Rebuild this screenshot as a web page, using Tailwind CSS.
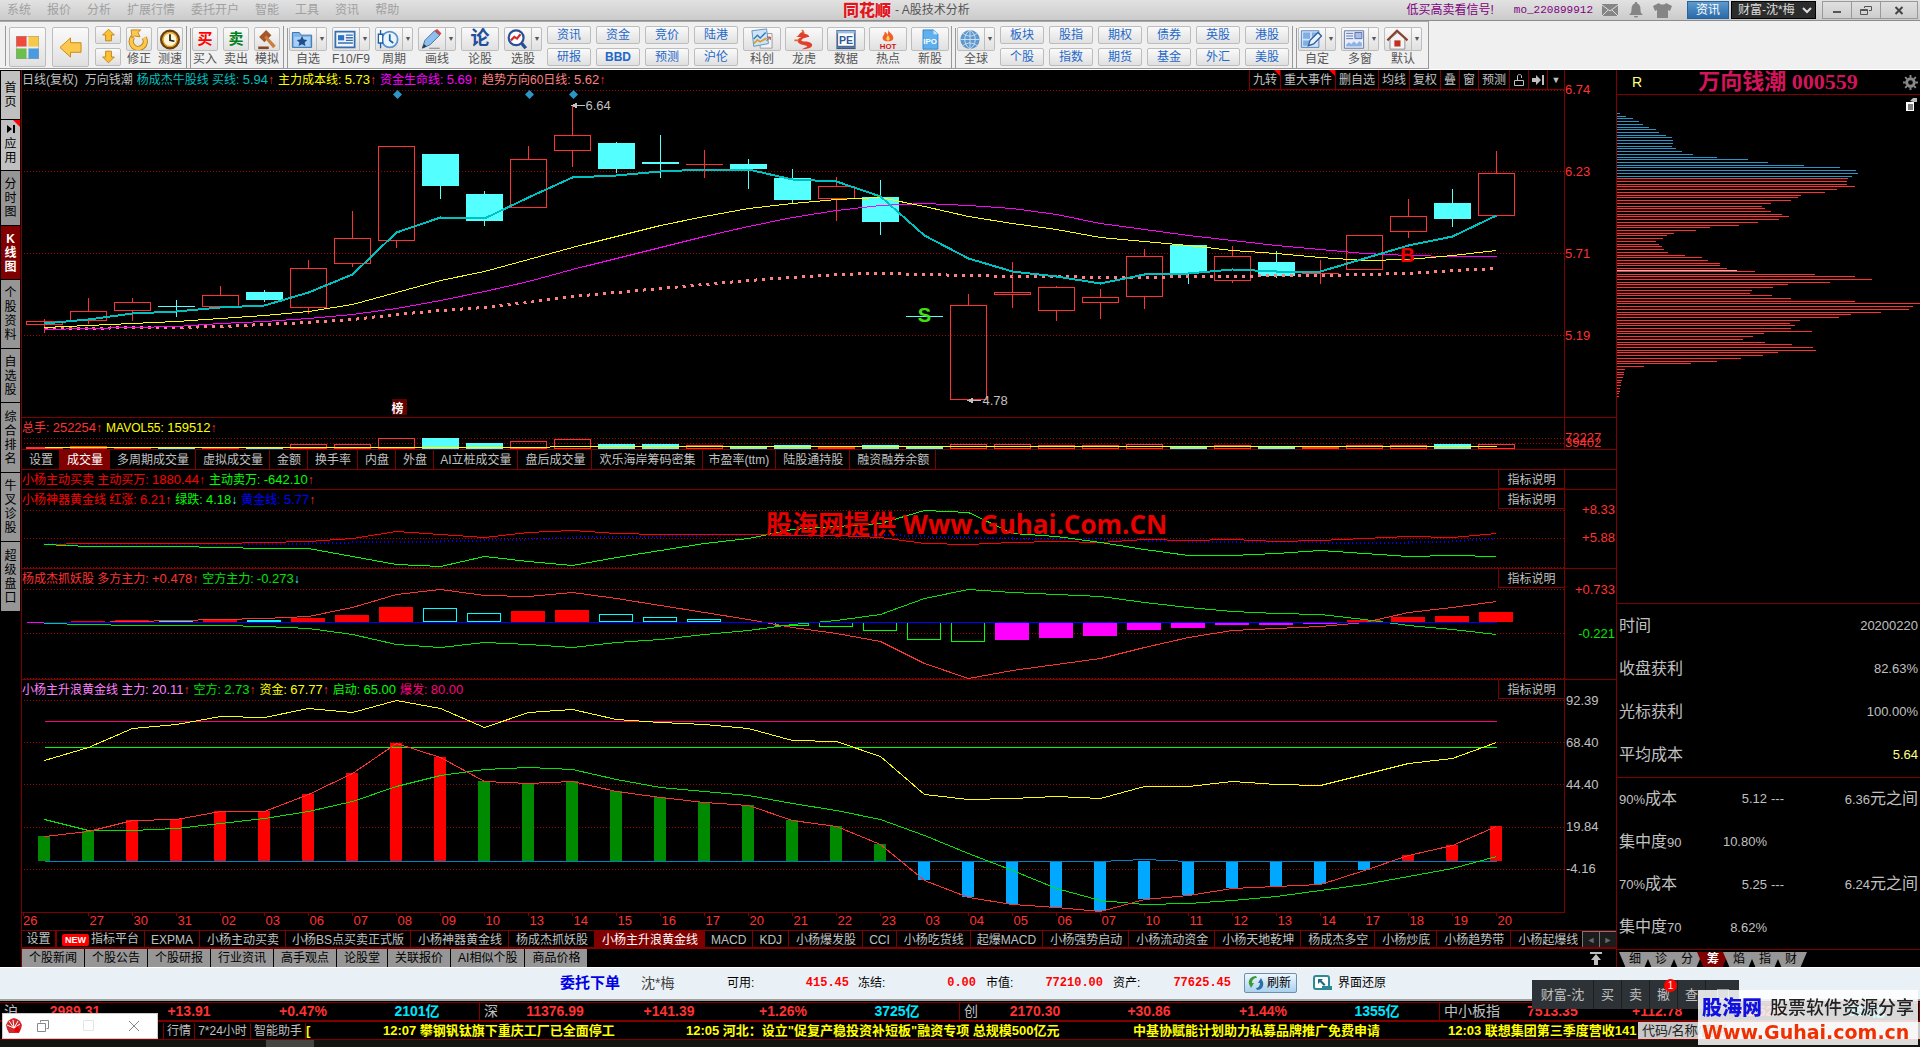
<!DOCTYPE html>
<html lang="zh-CN">
<head>
    <meta charset="UTF-8">
    <meta name="viewport" content="width=device-width, initial-scale=1.0">
    <title>同花顺 - A股技术分析</title>
    <script src="https://cdn.jsdelivr.net/npm/@tailwindcss/browser@4"></script>
</head>
<body class="bg-black min-h-screen flex flex-col overflow-hidden text-[12px] leading-[16px] text-[#c0c0c0] font-['Liberation_Sans','Noto_Sans_CJK_SC',sans-serif]">

    <!-- 标题栏 -->
    <header class="h-[21px] flex items-center bg-linear-to-b from-[#e2e2e2] to-[#cbcbcb] border-b border-[#8c8c8c] relative">
        <nav id="menu" class="flex gap-4 pl-[7px] text-[#a0a0a0]"></nav>
        <div class="absolute left-[843px] flex items-center gap-1 text-[#555]">
            <span class="text-[16px] leading-[17px] font-black text-[#e0161c] [text-shadow:0_0_2px_#fff]">同花顺</span>
            <span>- A股技术分析</span>
        </div>
        <div class="ml-auto flex items-center h-full">
            <a href="#" class="text-[#800080] mr-5">低买高卖看信号!</a>
            <span class="text-[#800080] text-[11px] font-['Liberation_Mono',monospace] mr-[9px]">mo_220899912</span>
            <svg class="w-4 h-3 mr-[11px]" viewBox="0 0 16 12"><path fill="#858585" d="M0 0h16v12H0z"/><path d="M0 1l8 6 8-6M0 12l6-6M16 12l-6-6" stroke="#ddd" fill="none"/></svg>
            <svg class="w-[14px] h-4 mr-[10px]" viewBox="0 0 14 16"><path fill="#858585" d="M7 0c1 0 1.300.700 1.300 1.500C11 2.500 11.500 5 11.500 8c0 2.500 1 3.500 2.500 5H0c1.500-1.500 2.500-2.500 2.500-5 0-3 .5-5.500 3.200-6.500C5.700.700 6 0 7 0zM5 14h4c0 2-4 2-4 0z"/></svg>
            <svg class="w-[19px] h-[15px] mr-[15px]" viewBox="0 0 19 15"><path fill="#858585" d="M6 0c1 2 6 2 7 0l6 3-2 5-2-1v8H4V7L2 8 0 3z"/></svg>
            <button class="w-[42px] h-[18px] bg-linear-to-b from-[#5b9bd0] to-[#2a6aa8] border border-[#28629a] text-white leading-[14px]">资讯</button>
            <select aria-label="账户" class="ml-[2px] w-[85px] h-[18px] bg-[#2c2c2c] border border-black text-[#ddd] text-[12px] leading-[16px] pl-[2px]"><option>财富-沈*梅</option></select>
            <div class="flex ml-[6px] mr-[2px] border border-[#999] text-[#555] h-[18px]">
                <button aria-label="最小化" class="w-[29px] flex justify-center items-center border-r border-[#999]"><svg width="10" height="10"><path d="M1 7h8" stroke="#555" stroke-width="2"/></svg></button>
                <button aria-label="还原" class="w-[29px] flex justify-center items-center border-r border-[#999]"><svg width="12" height="11" fill="none" stroke="#555"><path d="M4.500 3V1.500h7v4H9M.500 4.500h7v5h-7zM.500 5.500h7"/></svg></button>
                <button aria-label="关闭" class="w-[36px] flex justify-center items-center"><svg width="10" height="9"><path d="M1.500 1l7 7M8.500 1l-7 7" stroke="#444" stroke-width="2"/></svg></button>
            </div>
        </div>
    </header>

    <!-- 工具栏 -->
    <div class="h-[49px] bg-[#f0f0f0] border-b border-white text-[#555]">
        <div id="toolbar" class="w-[1429px] h-[48px] flex items-start pt-[4px] pl-[4px] border-t border-t-[#aaa] border-b border-b-[#999] border-r border-r-[#999]"></div>
    </div>

    <main class="flex">
        <aside id="side" class="w-[22px] shrink-0 border-r border-[#800000] pl-[1px] pt-[1px] flex flex-col gap-px"></aside>

        <section class="flex-1 min-w-0">
            <!-- K线 -->
            <div class="flex h-[348px] border-b border-[#800000]">
                <div class="flex-1 relative">
                    <svg id="price" class="absolute inset-0 w-full h-full"></svg>
                    <div class="relative pt-[2px] flex gap-1 whitespace-nowrap">
                        <span>日线(复权)&nbsp; 万向钱潮</span>
                        <span class="text-[#00c0c0]">杨成杰牛股线 买线: <b class="font-normal text-[13px]">5.94</b><i class="not-italic text-[#ff3232]">↑</i></span>
                        <span class="text-[#ffff00]">主力成本线: <b class="font-normal text-[13px]">5.73</b><i class="not-italic text-[#ff3232]">↑</i></span>
                        <span class="text-[#ff00ff]">资金生命线: <b class="font-normal text-[13px]">5.69</b><i class="not-italic text-[#ff3232]">↑</i></span>
                        <span class="text-[#ff8080]">趋势方向60日线: <b class="font-normal text-[13px]">5.62</b><i class="not-italic text-[#ff3232]">↑</i></span>
                    </div>
                    <div id="chartTools" class="absolute top-0 right-0 h-[20px] flex bg-black border-b border-l border-[#800000]"></div>
                </div>
                <div class="w-[52px] border-l border-[#800000] text-[#ff3232] text-[13px] pt-[12px] flex flex-col gap-[66px]">
                    <span>6.74</span><span>6.23</span><span>5.71</span><span>5.19</span>
                </div>
            </div>

            <!-- 成交量 -->
            <div class="flex h-[32px] border-b border-[#800000]">
                <div class="flex-1 relative">
                    <svg id="volume" class="absolute inset-0 w-full h-full"></svg>
                    <div class="relative pt-[2px] flex gap-1">
                        <span class="text-[#ff3232]">总手: <b class="font-normal text-[13px]">252254</b>↑</span>
                        <span class="text-[#ffff00] text-[12px]">MAVOL55: <b class="font-normal text-[13px]">159512</b><i class="not-italic text-[#ff3232]">↑</i></span>
                    </div>
                </div>
                <div class="w-[52px] border-l border-[#800000] text-[#ff3232] text-[13px] pt-[12px]">
                    <span class="block h-[5px]">72227</span><span class="block h-[5px]">39402</span>
                </div>
            </div>
            <div id="volTabs" class="flex h-[20px] border-b border-[#800000] whitespace-nowrap overflow-hidden"></div>

            <!-- 主动买卖 -->
            <div class="flex h-[20px] border-b border-[#800000]">
                <div class="flex-1 flex gap-1 pt-[2px] text-[#ff0000]">
                    <span>小杨主动买卖 主动买万: <b class="font-normal text-[13px]">1880.44</b>↑</span>
                    <span class="text-[#00ff00]">主动卖万: <b class="font-normal text-[13px]">-642.10</b><i class="not-italic text-[#ff3232]">↑</i></span>
                    <button class="ml-auto -mt-[2px] pt-px w-[66px] h-[19px] border-l border-b border-[#800000] text-[#c0c0c0]">指标说明</button>
                </div>
                <div class="w-[52px] border-l border-[#800000]"></div>
            </div>

            <!-- 神器黄金线 -->
            <div class="flex h-[79px] border-b border-[#800000]">
                <div class="flex-1 relative">
                    <svg id="gold" class="absolute inset-0 w-full h-full"></svg>
                    <div class="relative pt-[2px] flex gap-1 text-[#ff0000]">
                        <span>小杨神器黄金线 红涨: <b class="font-normal text-[13px]">6.21</b><i class="not-italic text-[#ff3232]">↑</i></span>
                        <span class="text-[#00ff00]">绿跌: <b class="font-normal text-[13px]">4.18</b><i class="not-italic text-[#54ffff]">↓</i></span>
                        <span class="text-[#0000ff]">黄金线: <b class="font-normal text-[13px]">5.77</b><i class="not-italic text-[#ff3232]">↑</i></span>
                    </div>
                    <button class="absolute top-0 right-0 pt-px w-[66px] h-[19px] border-l border-b border-[#800000] bg-black">指标说明</button>
                    <p class="absolute left-[744px] top-[16px] text-[#e60000] font-bold text-[26px] leading-[36px] whitespace-nowrap font-['Open_Sans','Noto_Sans_CJK_SC',sans-serif]">股海网提供 Www.Guhai.Com.CN</p>
                </div>
                <div class="w-[52px] border-l border-[#800000] text-[#ff3232] text-[13px] text-right pr-px pt-[12px] flex flex-col gap-[12px]">
                    <span>+8.33</span><span>+5.88</span>
                </div>
            </div>

            <!-- 抓妖股 -->
            <div class="flex h-[111px] border-b border-[#800000]">
                <div class="flex-1 relative">
                    <svg id="force" class="absolute inset-0 w-full h-full"></svg>
                    <div class="relative pt-[2px] flex gap-1">
                        <span class="text-[#ff3232]">杨成杰抓妖股 多方主力: <b class="font-normal text-[13px]">+0.478</b>↑</span>
                        <span class="text-[#00e600]">空方主力: <b class="font-normal text-[13px]">-0.273</b><i class="not-italic text-[#54ffff]">↓</i></span>
                    </div>
                    <button class="absolute top-0 right-0 pt-px w-[66px] h-[19px] border-l border-b border-[#800000] bg-black">指标说明</button>
                </div>
                <div class="w-[52px] border-l border-[#800000] text-[#ff3232] text-[13px] text-right pr-px pt-[13px] flex flex-col gap-[28px]">
                    <span>+0.733</span><span class="text-[#00e600]">-0.221</span>
                </div>
            </div>

            <!-- 主升浪 -->
            <div class="flex h-[233px]">
                <div class="flex-1 relative border-b border-[#800000]">
                    <svg id="wave" class="absolute inset-0 w-full h-full"></svg>
                    <div class="relative pt-[2px] flex gap-1">
                        <span class="text-[#ff80ff]">小杨主升浪黄金线 主力: <b class="font-normal text-[13px]">20.11</b><i class="not-italic text-[#ff3232]">↑</i></span>
                        <span class="text-[#00e600]">空方: <b class="font-normal text-[13px]">2.73</b><i class="not-italic text-[#ff3232]">↑</i></span>
                        <span class="text-[#ffff00]">资金: <b class="font-normal text-[13px]">67.77</b><i class="not-italic text-[#ff3232]">↑</i></span>
                        <span class="text-[#00ff00]">启动: <b class="font-normal text-[13px]">65.00</b></span>
                        <span class="text-[#ff0080]">爆发: <b class="font-normal text-[13px]">80.00</b></span>
                    </div>
                    <button class="absolute top-0 right-0 pt-px w-[66px] h-[19px] border-l border-b border-[#800000] bg-black">指标说明</button>
                </div>
                <div class="w-[52px] border-l border-[#800000] text-[13px] pl-px pt-[13px] flex flex-col gap-[26px]">
                    <span>92.39</span><span>68.40</span><span>44.40</span><span>19.84</span><span>-4.16</span>
                </div>
            </div>
            <div class="flex h-[17px]">
                <div class="flex-1 relative"><svg id="dates" class="absolute inset-0 w-full h-full"></svg></div>
                <div class="w-[52px]"></div>
            </div>

            <div class="flex h-[19px] border-t border-t-[#800000] border-b-2 border-b-[#800000] whitespace-nowrap">
                <div id="indTabs" class="flex-1 min-w-0 flex overflow-hidden leading-[17px]"></div>
                <button aria-label="向左" class="w-[17px] shrink-0 bg-[#1c1c1c] border-l border-t border-[#777] text-[#666] text-[9px] leading-[14px]">◄</button>
                <button aria-label="向右" class="w-[17px] shrink-0 bg-[#1c1c1c] border-l border-t border-[#777] text-[#666] text-[9px] leading-[14px]">►</button>
            </div>
            <div class="flex h-[18px] items-center whitespace-nowrap">
                <div id="newsTabs" class="flex gap-px h-full"></div>
                <svg class="ml-auto mr-[14px]" width="12" height="13" fill="#c0c0c0"><path d="M0 0h12v2H0zM6 2l5 6H8v5H4V8H1z"/></svg>
            </div>
        </section>

        <!-- 筹码分布 -->
        <section class="w-[304px] shrink-0 border-l border-[#800000] flex flex-col">
            <div class="h-[25px] border-b border-[#800000] flex items-center pl-[15px] pr-[2px]">
                <span class="text-[#ffff80] text-[14px]">R</span>
                <h1 class="ml-[56px] text-[#d4145a] font-bold text-[22px] leading-[24px] font-['Liberation_Serif','Noto_Sans_CJK_SC',serif]">万向钱潮 000559</h1>
                <svg class="ml-auto w-[15px] h-[15px]" viewBox="0 0 16 16"><circle cx="8" cy="8" r="4" fill="none" stroke="#888" stroke-width="3"/><path d="M8 0v3M8 13v3M0 8h3M13 8h3M2.300 2.300l2 2M11.700 11.700l2 2M13.700 2.300l-2 2M4.300 11.700l-2 2" stroke="#888" stroke-width="2"/></svg>
            </div>
            <div class="h-[508px] relative">
                <svg id="chips" class="absolute inset-0 w-full h-full"></svg>
                <svg class="absolute top-[3px] right-[1px]" width="14" height="13"><path fill="#fff" d="M1 4h8v9H1z"/><path d="M3 7h5M3 9h5M3 11h5" stroke="#000"/><path d="M5 3l3-3h4v4H9z" fill="#bbb"/></svg>
            </div>
            <dl class="h-[174px] border-t border-[#800000] px-[2px] grid grid-cols-[auto_1fr] items-center text-[16px] leading-[20px]">
                <dt>时间</dt><dd class="text-right text-[13px]">20200220</dd>
                <dt>收盘获利</dt><dd class="text-right text-[13px]">82.63%</dd>
                <dt>光标获利</dt><dd class="text-right text-[13px]">100.00%</dd>
                <dt>平均成本</dt><dd class="text-right text-[13px] text-[#ffff80]">5.64</dd>
            </dl>
            <dl class="h-[172px] border-t border-[#800000] px-[2px] grid grid-cols-[60px_88px_20px_1fr] items-center text-[16px] leading-[20px] whitespace-nowrap">
                <dt><b class="font-normal text-[13px]">90%</b>成本</dt><dd class="text-right text-[13px]">5.12</dd><dd class="pl-1 text-[13px]">---</dd><dd class="text-right"><b class="font-normal text-[13px]">6.36</b>元之间</dd>
                <dt>集中度<b class="font-normal text-[13px]">90</b></dt><dd class="text-right text-[13px]">10.80%</dd><dd></dd><dd></dd>
                <dt><b class="font-normal text-[13px]">70%</b>成本</dt><dd class="text-right text-[13px]">5.25</dd><dd class="pl-1 text-[13px]">---</dd><dd class="text-right"><b class="font-normal text-[13px]">6.24</b>元之间</dd>
                <dt>集中度<b class="font-normal text-[13px]">70</b></dt><dd class="text-right text-[13px]">8.62%</dd><dd></dd><dd></dd>
            </dl>
            <div id="sideTabs" class="h-[18px] border-t border-[#800000] pl-[2px] pt-[2px] flex"></div>
        </section>
    </main>

    <!-- 委托栏 -->
    <div class="h-[34px] bg-[#eaf1f6] border-t border-white border-b-2 border-b-[#a0a0a0] text-black flex items-center pl-[560px] pb-[2px] relative whitespace-nowrap">
        <a href="#" class="text-[#0000e6] font-bold text-[15px] w-[81px]">委托下单</a>
        <span class="text-[#444] text-[14px] w-[86px]">沈*梅</span>
        <span class="w-[36px]">可用:</span><b class="w-[86px] text-right text-[#ff0000] text-[12px] font-['Liberation_Mono',monospace]">415.45</b>
        <span class="w-[36px] ml-[9px]">冻结:</span><b class="w-[82px] text-right text-[#ff0000] text-[12px] font-['Liberation_Mono',monospace]">0.00</b>
        <span class="w-[36px] ml-[10px]">市值:</span><b class="w-[81px] text-right text-[#ff0000] text-[12px] font-['Liberation_Mono',monospace]">77210.00</b>
        <span class="w-[36px] ml-[10px]">资产:</span><b class="w-[82px] text-right text-[#ff0000] text-[12px] font-['Liberation_Mono',monospace]">77625.45</b>
        <button class="ml-[13px] w-[53px] h-[20px] rounded-[2px] border border-[#6d8fb0] bg-linear-to-b from-[#eef6fc] to-[#a9d2ef] flex items-center gap-[2px] pl-[2px]">
            <svg width="18" height="16" viewBox="0 0 18 16"><path d="M9 1C4 1 1 5 2 9l2 4 3-5H5c0-3 2-5 5-5z" fill="#3f9a35"/><path d="M10 15c5 0 7-4 6-8l-2-4-3 5h2c0 3-2 5-4 5z" fill="#2f6fa8"/></svg>刷新
        </button>
        <button class="ml-4 flex items-center gap-[5px]">
            <svg width="20" height="16" viewBox="0 0 20 16"><rect x="1" y="1" width="15" height="13" rx="2" fill="#fff" stroke="#2b8a94" stroke-width="2"/><path d="M5 4h5L8.500 5.500l4 4-1.500 1.500-4-4L5 9z" fill="#1d6d80"/><path d="M9 11h10v4H9z" fill="#2b8a94"/></svg>界面还原
        </button>
        <div class="absolute z-10 left-[1532px] top-[12px] h-[29px] flex bg-[#2d3237] text-[#c0c0c0] text-[13px] divide-x divide-[#1c1f22]">
            <span class="w-[62px] flex items-center justify-center">财富-沈</span>
            <button class="w-[28px]">买</button><button class="w-[28px]">卖</button>
            <button class="w-[28px] relative">撤<span class="absolute -top-px right-0 w-[13px] h-[13px] rounded-full bg-[#ff0000] text-white text-[10px] leading-[13px]">1</span></button>
            <button class="w-[28px]">查</button>
            <button aria-label="窗口" class="w-[33px] flex justify-center items-center"><svg width="12" height="11"><rect x=".5" y=".5" width="11" height="9" fill="none" stroke="#999"/></svg></button>
        </div>
    </div>

    <!-- 指数栏 -->
    <div id="indexRow" class="mt-px h-[20px] border-t border-t-[#800000] border-b-2 border-b-[#800000] grid grid-cols-4 font-bold text-[14px] leading-[17px] text-[#ff3232] whitespace-nowrap"></div>

    <!-- 滚动资讯 -->
    <div class="h-[18px] border-b border-[#800000] flex items-center pl-[163px] whitespace-nowrap overflow-hidden">
        <button class="w-[32px] shrink-0 border-r border-l border-[#800000]">行情</button>
        <button class="w-[56px] shrink-0 border-r border-[#800000]">7*24小时</button>
        <button class="w-[55px] shrink-0 border-r border-[#800000]">智能助手</button>
        <div class="flex-1 min-w-0 overflow-hidden flex font-bold text-[13px] text-[#ffff00]">
            <a href="#" class="shrink-0 w-[77px]">[</a>
            <a href="#" class="shrink-0 w-[303px]">12:07 攀钢钒钛旗下重庆工厂已全面停工</a>
            <a href="#" class="shrink-0 w-[447px]">12:05 河北：设立"促复产稳投资补短板"融资专项 总规模500亿元</a>
            <a href="#" class="shrink-0 w-[315px]">中基协赋能计划助力私募品牌推广免费申请</a>
            <a href="#" class="shrink-0">12:03 联想集团第三季度营收141</a>
        </div>
        <input aria-label="代码搜索" placeholder="代码/名称/简拼" class="w-[282px] h-[17px] bg-[#c8c8c8] pl-1 text-[13px] placeholder:text-[#222]">
    </div>
    <div class="flex-1 bg-[#14150e] flex"><div class="ml-[266px] w-[48px] bg-[#45463f]"></div></div>

    <!-- 浮动小窗 -->
    <div class="fixed left-[2px] bottom-[8px] w-[156px] h-[26px] bg-white border border-[#ccc] flex items-center">
        <svg class="ml-[3px]" width="16" height="16" viewBox="0 0 16 16"><path d="M8 0l3 1 3 2 2 4-1 4-2 4H3L1 11 0 7l2-4 3-2z" fill="#d02a2e"/><path d="M8 10L3 3M8 10L7 2M8 10l4-7M8 10L1 7M8 10l6-4" stroke="#fff"/><path d="M11 8c4 4 3 6 0 6s-4-2 0-6z" fill="#e00"/></svg>
        <svg class="ml-[15px]" width="12" height="12" fill="none" stroke="#888"><path d="M3.500 2.500v-2h8v8h-2M.500 3.500h8v8h-8z"/></svg>
        <svg class="ml-[34px]" width="12" height="12" fill="none" stroke="#e5e5e5"><path d="M.500 .500h10v10h-10z"/></svg>
        <svg class="ml-[33px]" width="12" height="12" stroke="#888"><path d="M1 1l10 10M11 1L1 11"/></svg>
    </div>

    <!-- 站点水印 -->
    <div class="fixed z-20 right-[2px] bottom-[2px] w-[220px] h-[55px] bg-white/85 px-1 pt-[4px] whitespace-nowrap">
        <div class="flex items-center gap-2 h-[27px]">
            <span class="text-[#1010e0] font-black text-[20px] leading-[26px]">股海网</span>
            <span class="text-[#222] font-medium text-[18px] leading-[24px]">股票软件资源分享</span>
        </div>
        <div class="text-[#f03000] font-bold text-[19px] leading-[22px] font-['DejaVu_Sans',sans-serif]">Www.Guhai.com.cn</div>
    </div>

    <script>
        const $ = id => document.getElementById(id);

        $('menu').innerHTML = ['系统', '报价', '分析', '扩展行情', '委托开户', '智能', '工具', '资讯', '帮助']
            .map(t => `<a href="#">${t}</a>`).join('');

        // ---------- 工具栏 ----------
        const ICONS = {
            grid: '<path d="M0 0h11v11H0z" fill="#ef4b3d"/><path d="M13 0h11v11H13z" fill="#f7c948"/><path d="M0 13h11v11H0z" fill="#6bbf4b"/><path d="M13 13h11v11H13z" fill="#4a9ae0"/><path d="M0 0h24v24H0z" fill="none" stroke="#999"/>',
            left: '<path d="M1 12L12 2v5h11v10H12v5z" fill="#fcc84e" stroke="#c98a10"/>',
            up: '<path d="M12 2l10 10h-5v10H7V12H2z" fill="#fcc030" stroke="#b98018" stroke-width="1.500"/>',
            down: '<path d="M12 22L2 12h5V2h10v10h5z" fill="#fcc030" stroke="#b98018" stroke-width="1.500"/>',
            redo: '<path d="M5 9a8 8 0 1 0 13 1" fill="none" stroke="#b98018" stroke-width="6"/><path d="M5 9a8 8 0 1 0 13 1" fill="none" stroke="#fcc84e" stroke-width="4"/><path d="M3 1h11l-3 3 2 5-6-1-3 2z" fill="#fcc84e" stroke="#b98018"/>',
            clock: '<circle cx="12" cy="12" r="10" fill="#fff6d8" stroke="#6b3f10" stroke-width="3"/><circle cx="12" cy="12" r="8" fill="none" stroke="#e6a020" stroke-width="1.500"/><path d="M12 6v7l5 1" stroke="#222" fill="none" stroke-width="2"/>',
            gavel: '<path d="M3 9l8-8 6 6-8 8z" fill="#a5562a"/><path d="M11 7l11 12-3 3L9 10z" fill="#c98040"/><path d="M2 20h12v3H2z" fill="#8a4520"/>',
            folder: '<path d="M1 4h8l2 3h12v14H1z" fill="#7db4ea" stroke="#2f68a8"/><path d="M3 9h18v11H3z" fill="#a9d0f5"/><path d="M12 8l2 4 4 .500-3 3 1 4-4-2-4 2 1-4-3-3 4-.500z" fill="#1f4f8a"/>',
            card: '<path d="M1 3h22v18H1z" fill="#eef5fd" stroke="#3a6fae" stroke-width="2"/><path d="M4 7h7v6H4z" fill="#2f74c4"/><path d="M13 7h8M13 10h8M13 13h8M4 16h17" stroke="#3a6fae" stroke-width="1.500"/>',
            period: '<circle cx="14" cy="12" r="9" fill="#eaf4fd" stroke="#5a93cc" stroke-width="2"/><path d="M14 6v7l4 3" stroke="#1f5fa8" fill="none" stroke-width="2"/><path d="M1 6h5v10H1zM3.500 1v5M3.500 16v6" stroke="#1f5fa8" fill="#fff" stroke-width="1.500"/>',
            pen: '<path d="M2 22l3-9L16 2l6 5L11 18z" fill="#8fc0ec" stroke="#2f68a8"/><path d="M16 2l3-2 5 5-2 2z" fill="#d0443c"/><path d="M2 22l2-5 3 3z" fill="#333"/><path d="M10 22h12" stroke="#777"/>',
            search: '<circle cx="11" cy="10" r="8.500" fill="#fff" stroke="#2a4f96" stroke-width="2.500"/><path d="M17 16l5 6" stroke="#2a4f96" stroke-width="4"/><path d="M5 13l4-4 3 2 4-5" fill="none" stroke="#d8282c" stroke-width="2.500"/>',
            star: '<path d="M10 6h13v16H10z" fill="#f3f3f3" stroke="#999"/><path d="M1 3l16-2 2 16-16 3z" fill="#cfe4f8" stroke="#5a8fc0"/><path d="M3 12l4-4 3 3 6-6" fill="none" stroke="#3777b8" stroke-width="1.500"/><path d="M3 17l4-4 3 2 7-4" fill="none" stroke="#d8a030" stroke-width="2"/><path d="M17 14l4-4M18 10h3v3" stroke="#a03020" fill="none"/>',
            dragon: '<path d="M3 9c4-1 3-6 9-6-2 3 6 2 6 6-3 0-9 2-9 4s10 0 12 4-5 6-12 6c5-2 8-3 6-4S4 18 5 13c0-2 2-3 4-4-2 0-4 0-6 0z" fill="#e0402c"/><path d="M10 1l2 4M1 13h5" stroke="#e86a30" stroke-width="2"/>',
            pe: '<path d="M2 2h20v18H2z" fill="#fff" stroke="#4a6a9a" stroke-width="2"/><path d="M2 2h20v3H2z" fill="#9dbbe0"/><path d="M1 21h22v2H1z" fill="#3a5a8c"/><text x="12" y="17" text-anchor="middle" font-size="12" font-weight="bold" fill="#2f5a9a">PE</text>',
            hot: '<path d="M12 0c1 5 7 6 6 11-1 4-11 4-12 0-1-4 3-4 2-8 3 1 3 3 3 4 1-2 2-4 1-7z" fill="#f0602c"/><path d="M12 7c3 4 2 6 0 6s-3-2 0-6z" fill="#ffd54a"/><text x="12" y="23" text-anchor="middle" font-size="9" font-weight="bold" fill="#d01818">HOT</text>',
            ipo: '<path d="M4 1h12l5 5v17H4z" fill="#5fb0ee" stroke="#2f80c4"/><path d="M16 1v5h5z" fill="#cfe6fa"/><text x="12" y="17" text-anchor="middle" font-size="9" font-weight="bold" fill="#fff">IPO</text>',
            globe: '<circle cx="12" cy="12" r="11" fill="#5f98cc"/><path d="M1 12h22M12 1v22M4 5c5 4 11 4 16 0M4 19c5-4 11-4 16 0M12 1c-8 6-8 16 0 22M12 1c8 6 8 16 0 22" fill="none" stroke="#d5e6f5"/>',
            custom: '<path d="M1 2h20v19H1z" fill="#cfe2f8" stroke="#4a7ab8"/><path d="M3 4h8v7H3zM13 4h6v7h-6zM3 13h8v6H3z" fill="#7daee4"/><path d="M9 19l2-6 9-9 4 4-9 9z" fill="#eaf2fa" stroke="#2f5f9a" stroke-width="1.500"/>',
            multi: '<path d="M1 2h22v20H1z" fill="#e6effa" stroke="#5a6f9a"/><path d="M3 5h8M3 8h8M3 11h8" stroke="#5868a8"/><path d="M13 4h8v7h-8z" fill="#a8bfe6" stroke="#5868a8"/><path d="M3 18l3-3 3 2 3-3 3 3 3-3 3 2v4H3z" fill="#8fb2e4"/>',
            home: '<path d="M4 11v12h17V11l-8-7z" fill="#f4f4f4" stroke="#888"/><path d="M1 13L12 2l12 11" fill="none" stroke="#8a4030" stroke-width="2.500"/><path d="M9 13h7v7H9z" fill="#c03020"/>',
        };
        const svg = (k, s) => `<svg class="shrink-0 ${s || 'w-[22px] h-[21px]'}" viewBox="0 0 24 24">${ICONS[k]}</svg>`;
        const BTN = 'flex items-center justify-center rounded-[2px] border border-[#bdbdbd] bg-linear-to-b from-[#fafafa] to-[#e0e0e0]';
        const big = k => `<button aria-label="${k}" class="mt-px w-[37px] h-[40px] mr-[6px] shrink-0 ${BTN}">${svg(k, 'w-[23px] h-[23px]')}</button>`;
        const sep = () => '<span class="-ml-[2px] w-[6px] h-[43px] shrink-0 border-l border-[#999] flex items-center pl-[2px]"><i class="w-[2px] h-[40px] border-r border-[#999]"></i></span>';
        // 双排文字按钮
        const pair = (a, b) => `<div class="w-[44px] mr-[5px] shrink-0 flex flex-col gap-[4px]">${[a, b].map(t =>
            `<button class="h-[18px] text-[#1e68c8] ${t === 'BBD' ? 'font-bold font-[\'Liberation_Serif\',serif]' : ''} ${BTN}">${t}</button>`).join('')}</div>`;
        const tool = (label, icon, drop) => `<button class="w-[38px] ${drop || label === '论股' ? 'mr-[5px]' : 'mr-[4px]'} mt-px shrink-0 flex flex-col items-center whitespace-nowrap">
            <span class="w-full h-[24px] ${BTN}">${icon}${drop ? '<i class="ml-[3px] h-full border-l border-[#bdbdbd] not-italic text-[7px] leading-[22px] pl-[2px]">▼</i>' : ''}</span>
            <span class="leading-[16px]">${label}</span></button>`;
        const small = (label, icon) => `<button class="w-[26px] mr-[5px] mt-px shrink-0 flex flex-col items-center whitespace-nowrap">
            <span class="w-full h-[24px] ${BTN}">${icon}</span><span class="leading-[16px]">${label}</span></button>`;

        $('toolbar').innerHTML = '<i class="w-[2px] h-[40px] border-r border-[#999] mr-[3px] shrink-0"></i>' + big('grid') + big('left') +
            `<div class="w-[26px] mr-[5px] shrink-0 flex flex-col gap-[4px]"><button aria-label="上" class="h-[18px] ${BTN}">${svg('up', 'w-[15px] h-[14px]')}</button><button aria-label="下" class="h-[18px] ${BTN}">${svg('down', 'w-[15px] h-[14px]')}</button></div>` +
            small('修正', svg('redo')) + small('测速', svg('clock')) + sep() +
            small('买入', '<b class="text-[15px] text-[#ff0000]">买</b>') + small('卖出', '<b class="text-[15px] text-[#008020]">卖</b>') + small('模拟', svg('gavel')) + sep() +
            tool('自选', svg('folder'), 1) + tool('F10/F9', svg('card'), 1) + tool('周期', svg('period'), 1) + tool('画线', svg('pen'), 1) +
            tool('论股', '<b class="text-[19px] text-[#1f4f9a]">论</b>') + tool('选股', svg('search'), 1) +
            pair('资讯', '研报') + pair('资金', 'BBD') + pair('竞价', '预测') + pair('陆港', '沪伦') +
            tool('科创', svg('star', 'w-[28px] h-[22px]')) + tool('龙虎', svg('dragon')) + tool('数据', svg('pe')) + tool('热点', svg('hot')) + tool('新股', svg('ipo')) + sep() +
            tool('全球', svg('globe'), 1) +
            pair('板块', '个股') + pair('股指', '指数') + pair('期权', '期货') + pair('债券', '基金') + pair('英股', '外汇') + pair('港股', '美股') + sep() +
            tool('自定', svg('custom'), 1) + tool('多窗', svg('multi'), 1) + tool('默认', svg('home'), 1);

        // ---------- 左侧栏 ----------
        const sides = [['首页', 48, 1], ['应用', 50, 1], ['分时图', 54], ['K线图', 53, 2], ['个股资料', 68], ['自选股', 53], ['综合排名', 69], ['牛叉诊股', 68], ['超级盘口', 69]];
        const sideCls = ['bg-[#969696] text-black', 'bg-[#c0c0c0] text-black', 'bg-[#800000] text-white font-bold'];
        $('side').innerHTML = sides.map(([t, h, c]) =>
            `<button class="relative w-[19px] flex flex-col items-center justify-center leading-[14px] text-[12px] ${sideCls[c || 0]}" style="height:${h}px">${t === '应用' ? '<svg width="8" height="8" class="mb-[4px]"><path d="M0 0l5 4-5 4zM6 0h2v8H6z"/></svg><i class="absolute right-0 top-0 border-t-[7px] border-t-[#ff0000] border-l-[7px] border-l-transparent"></i>' : ''}${[...t].map(s => `<span>${s}</span>`).join('')}</button>`).join('');

        // ---------- 标签 ----------
        const tabs = (list, on) => list.map(t => `<button class="h-full pt-px shrink-0 ${/[A-Z(]/.test(t) ? 'px-[6px]' : 'pl-[7px] pr-[6px]'} border-r border-[#800000] ${t === on ? 'bg-[#800000] text-white' : ''}">${t}</button>`).join('');
        $('volTabs').innerHTML = tabs(['设置', '成交量', '多周期成交量', '虚拟成交量', '金额', '换手率', '内盘', '外盘', 'AI立桩成交量', '盘后成交量', '欢乐海岸筹码密集', '市盈率(ttm)', '陆股通持股', '融资融券余额'], '成交量');
        $('indTabs').innerHTML = '<button class="shrink-0 w-[34px] border-r border-[#800000]">设置</button><button class="shrink-0 w-[89px] border-x border-[#800000]"><b class="bg-[#ff0000] text-white text-[9px] rounded-[2px] px-[3px] py-px mr-[2px]">NEW</b>指标平台</button>' +
            tabs(['EXPMA', '小杨主动买卖', '小杨BS点买卖正式版', '小杨神器黄金线', '杨成杰抓妖股', '小杨主升浪黄金线', 'MACD', 'KDJ', '小杨爆发股', 'CCI', '小杨吃货线', '起爆MACD', '小杨强势启动', '小杨流动资金', '小杨天地乾坤', '杨成杰多空', '小杨炒底', '小杨趋势带', '小杨起爆线'], '小杨主升浪黄金线');
        $('newsTabs').innerHTML = ['个股新闻', '个股公告', '个股研报', '行业资讯', '高手观点', '论股堂', '关联报价', 'AI相似个股', '商品价格']
            .map(t => `<button class="bg-[#969696] text-black px-[7px] leading-[18px]">${t}</button>`).join('');
        $('chartTools').innerHTML = ['九转', '重大事件', '删自选', '均线', '复权', '叠', '窗', '预测']
            .map((t, i) => `<button class="relative px-[3px] border-r border-[#800000] leading-[20px]">${t}${i < 2 ? '<i class="absolute right-0 top-0 border-t-[6px] border-t-[#ff0000] border-l-[6px] border-l-transparent"></i>' : ''}</button>`).join('') +
            '<button aria-label="锁定" class="w-[19px] flex items-center justify-center border-r border-[#800000]"><svg width="12" height="14" fill="none" stroke="#c0c0c0"><path d="M1.500 7.500h9v5h-9zM4.500 7V3c0-2 4-2 4 0v2"/></svg></button>' +
            '<button aria-label="末端" class="w-[19px] flex items-center justify-center border-r border-[#800000]"><svg width="13" height="12" fill="#c0c0c0"><path d="M0 4h4V1l5 5-5 5V8H0zM10 1h2v10h-2z"/></svg></button>' +
            '<button aria-label="更多" class="w-[16px] text-[9px]">▼</button>';
        $('sideTabs').innerHTML = [...'细诊分筹焰指财'].map(t =>
            `<button class="w-[32px] -mr-[6px] h-[15px] leading-[15px] text-[12px] [clip-path:polygon(0_0,100%_0,80%_100%,20%_100%)] ${t === '筹' ? 'bg-[#800000] text-white font-bold' : 'bg-[#969696] text-black'}">${t}</button>`).join('');

        $('indexRow').innerHTML = [
            ['沪', '2989.31', '+13.91', '+0.47%', '2101亿'], ['深', '11376.99', '+141.39', '+1.26%', '3725亿'],
            ['创', '2170.30', '+30.86', '+1.44%', '1355亿'], ['中小板指', '7513.35', '+112.78', '+1.52%', '564亿'],
        ].map(([n, a, b, c, d]) => `<div class="flex min-w-0 border-r border-[#800000] pl-[4px]"><span class="shrink-0 font-normal text-[#c0c0c0]">${n}</span>
            <span class="w-[114px] text-center">${a}</span><span class="w-[114px] text-center">${b}</span><span class="w-[114px] text-center">${c}</span><span class="w-[114px] text-center text-[#00e6ff]">${d}</span></div>`).join('');

        // ---------- 图表 ----------
        const N = 34, RED = '#ff3232', CYAN = '#54ffff';
        let W = 0;
        const X = i => 22.5 + i * (W - 90) / (N - 1);
        const line = (ys, color, extra = '') => `<polyline fill="none" stroke="${color}" ${extra} points="${ys.map((y, i) => X(i) + ',' + (y + .5)).join(' ')}"/>`;
        const hline = (y, color, x1 = 2, x2 = W, extra = '') => `<path d="M${x1} ${y + .5}H${x2}" stroke="${color}" ${extra}/>`;
        const grid = ys => ys.map(y => hline(y, '#a00000', 2, W, 'stroke-dasharray="1 2"')).join('');
        const rect = (x, y, w, h, color, fill) => fill
            ? `<rect x="${x}" y="${y}" width="${w}" height="${h}" fill="${color}"/>`
            : `<rect x="${x + .5}" y="${y + .5}" width="${w - 1}" height="${Math.max(h - 1, .1)}" fill="none" stroke="${color}"/>`;
        const draw = (id, top, body) => {
            const el = $(id);
            el.setAttribute('viewBox', `0 ${top} ${W} ${el.parentElement.clientHeight}`);
            el.setAttribute('shape-rendering', 'crispEdges');
            el.innerHTML = body;
        };

        // [跌?, 最高, 实体上沿, 实体下沿, 最低]
        const candles = [[0,319,321,324,333],[0,298,311,320,324],[0,298,302,310,321],[1,300,306,307,317],[0,286,295,306,306],[1,290,292,300,302],[0,260,268,307,314],[0,211,238,263,267],[0,146,146,240,248],[1,154,154,186,199],[1,191,194,221,226],[0,146,159,207,207],[0,105,135,150,167],[1,142,143,169,173],[1,135,162,164,178],[0,150,164,164,178],[1,159,164,169,189],[1,169,178,200,203],[0,177,186,198,221],[1,180,197,222,235],[1,316,316,317,316],[0,294,305,399,399],[0,262,292,294,308],[0,286,287,310,321],[0,289,297,302,319],[0,249,256,296,309],[1,245,245,273,284],[0,246,256,280,283],[1,251,262,276,278],[0,260,273,273,284],[0,235,235,269,269],[0,199,216,231,238],[1,189,203,219,227],[0,151,173,215,215]];
        const buy = [323,319,313,311,307,305,292,274,232,217,218,197,177,175,171,169,169,179,181,196,235,258,271,276,283,274,273,269,271,271,258,245,236,215];
        const cost = [327,325,323,321,318,315,311,304,292,280,271,259,247,236,225,216,208,203,199,197,206,216,223,229,237,241,245,250,253,257,260,259,255,250];
        const life = [329,328,327,326,323,321,318,314,308,300,291,281,269,258,247,236,226,217,210,205,203,205,208,214,223,229,235,240,245,249,253,255,256,256];
        const trend = [328,328,327,327,326,324,322,319,314,310,307,302,296,292,288,284,280,277,274,273,274,275,276,276,277,277,276,276,275,275,274,273,270,268];
        const vols = [447,446,447,447,447,447,444,444,438,438,443,441,439,444,444,445,447,445,447,445,447,444,444,445,445,444,447,445,447,446,445,445,444,444];
        const M = '#ff00ff', G = '#00ff00', R = '#ff0000', C = '#00ffff';
        // 多空柱: [颜色, 实心?, 端点]
        const bars = [0,[R,1,621],[R,1,620],[C,1,620],[R,1,620],[C,1,620],[R,1,618],[R,1,615],[R,1,607],[C,0,608],[C,0,613],[R,1,611],[R,1,610],[C,0,614],[C,0,617],[C,0,619],0,[G,0,626],[G,0,627],[G,0,631],[G,0,640],[G,0,642],[M,1,640],[M,1,638],[M,1,636],[M,1,630],[M,1,628],[M,1,625],[M,1,625],[M,1,624],[R,1,620],[R,1,617],[R,1,616],[R,1,612]];
        const main = [836,831,820,819,811,811,794,773,743,757,781,783,781,791,797,802,805,820,826,844,880,897,904,907,911,899,895,888,886,884,870,855,845,826];
        const days = '26 27 30 31 02 03 06 07 08 09 10 13 14 15 16 17 20 21 22 23 03 04 05 06 07 10 11 12 13 14 17 18 19 20'.split(' ');

        function render() {
            W = $('price').parentElement.clientWidth;

            draw('price', 70, grid([90, 171, 253, 335]) +
                candles.map(([d, h, t, b, l], i) => {
                    const c = d ? CYAN : RED, x = X(i);
                    return `<path d="M${x} ${h}V${t}M${x} ${b}V${l}" stroke="${c}"/>` + rect(x - 18.5, t, 37, d ? b - t : b - t + 1, c, d);
                }).join('') +
                line(trend, '#ff8080', 'stroke-width="3" stroke-dasharray="3 5"') + line(life, '#ff00ff') + line(cost, '#ffff00') + line(buy, '#00c0c0', 'stroke-width="2"') +
                [8, 11, 12].map(i => `<path shape-rendering="auto" d="M${X(i) + 1} 90l4.500 4.500-4.500 4.500-4.500-4.500z" fill="#2a96c8"/>`).join('') +
                `<path d="M${X(12)} 105.500h12M${X(12)} 105.500l4-2v4zM${X(21)} 400.500h12M${X(21)} 400.500l4-2v4z" stroke="#c0c0c0" fill="#c0c0c0"/>
                 <g font-size="13" fill="#c0c0c0"><text x="${X(12) + 13}" y="110">6.64</text><text x="${X(21) + 14}" y="405">4.78</text></g>
                 <text x="${X(20)}" y="322" text-anchor="middle" font-size="20" font-weight="bold" fill="#40e010">S</text>
                 <text x="${X(31) - 1}" y="262" text-anchor="middle" font-size="20" font-weight="bold" fill="#f00000">B</text>
                 <rect x="${X(8) - 5}" y="399" width="15" height="16" fill="#600000"/><text x="${X(8) - 5}" y="413" font-size="12" font-weight="bold" fill="#fff">榜</text>`);

            draw('volume', 418, grid([438, 443]) +
                vols.map((t, i) => rect(X(i) - 18.5, t, 37, 449 - t, candles[i][0] ? CYAN : RED, candles[i][0] || t > 445)).join('') +
                line(vols.map((_, i) => i < 12 ? 447 : 446), '#ffff00'));

            draw('gold', 490, grid([510, 538, 567]) +
                line([544,543,543,543,543,543,543,542,541,541,540,539,537,536,536,535,534,534,534,534,536,537,538,538,539,540,541,541,541,542,542,542,541,538], '#0000ff', 'stroke-width="2" stroke-dasharray="1 3"') +
                line([544,543,543,543,543,542,541,538,531,534,537,532,530,533,534,534,534,535,535,537,543,544,542,541,542,539,540,539,541,540,538,536,537,533], '#ff0000') +
                line([544,546,546,546,547,548,548,556,564,566,556,561,565,557,550,543,538,529,526,523,510,512,533,536,542,549,555,555,553,550,553,556,555,556], '#00ff00'));

            draw('force', 569, grid([589, 633, 678]) +
                bars.map((b, i) => b ? rect(X(i) - 17.5, Math.min(b[2], 622), 34, Math.abs(b[2] - 622), b[0], b[1]) : '').join('') +
                line([622,622,621,620,619,618,616,607,594,589,595,596,592,598,605,612,619,627,633,641,663,678,670,664,658,647,637,630,628,626,622,612,607,601], RED) +
                line([623,624,625,625,625,626,628,634,644,647,642,644,647,642,639,634,630,624,620,614,598,589,592,594,596,602,607,611,613,614,619,625,629,634], '#00e600') +
                hline(622, M, 5, 22) + hline(622, '#0000ff', 22, X(33)));

            draw('wave', 680, grid([700, 742, 784, 827, 869]) +
                main.map((y, i) => rect(X(i) - 6.5, Math.min(y, 861), 12, Math.abs(861 - y), y > 861 ? '#00a8ff' : i < 2 || (i > 9 && i < 20) ? '#008a00' : R, 1)).join('') +
                line(main.map((_, i) => i === 25 ? 859 : 861), '#0080c8') +
                hline(721, '#ff0080', X(0), X(33)) + hline(747, '#00ff00', X(0), X(33)) +
                line([760,747,728,724,716,717,708,712,700,708,727,712,709,719,722,724,728,740,741,756,794,799,798,796,798,786,786,781,784,785,774,763,758,742], '#ffff00') +
                line([819,830,830,828,823,818,811,801,786,775,769,767,769,779,787,791,795,803,810,819,835,853,870,888,900,904,903,900,896,890,884,876,868,856], '#00e600') +
                line(main, RED));

            draw('dates', 913, days.map((t, i) => `<path d="M${i ? X(i) : 1} 913v3" stroke="#800000"/><text x="${i ? X(i) + 1 : 1}" y="925" font-size="13" fill="${RED}">${t}</text>`).join(''));
        }
        new ResizeObserver(render).observe($('price').parentElement);
        window.addEventListener('load', render);
        render();

        // 筹码: 前 24 根为套牢盘
        const chips = [3,9,16,22,26,32,39,42,49,55,56,56,55,59,65,76,100,131,151,187,223,239,241,235,231,230,230,238,220,208,184,181,174,154,145,148,154,165,172,162,141,122,93,79,57,50,46,39,42,45,47,51,68,85,91,103,103,110,138,198,238,255,213,171,156,135,133,155,174,238,303,296,292,264,234,222,183,173,178,174,195,147,136,126,148,175,196,199,161,146,124,100,74,27,8,7,7,6,5,4,4,3,3,2,2];
        $('chips').setAttribute('shape-rendering', 'crispEdges');
        $('chips').innerHTML = chips.map((w, i) => `<rect x="0" y="${18 + Math.round(i * 283 / (chips.length - 1))}" width="${w}" height="1" fill="${i < 24 ? '#2a96c8' : RED}"/>`).join('') +
            '<rect x="0" y="175" width="120" height="1" fill="#c0c0c0"/>';
    </script>
</body>
</html>
